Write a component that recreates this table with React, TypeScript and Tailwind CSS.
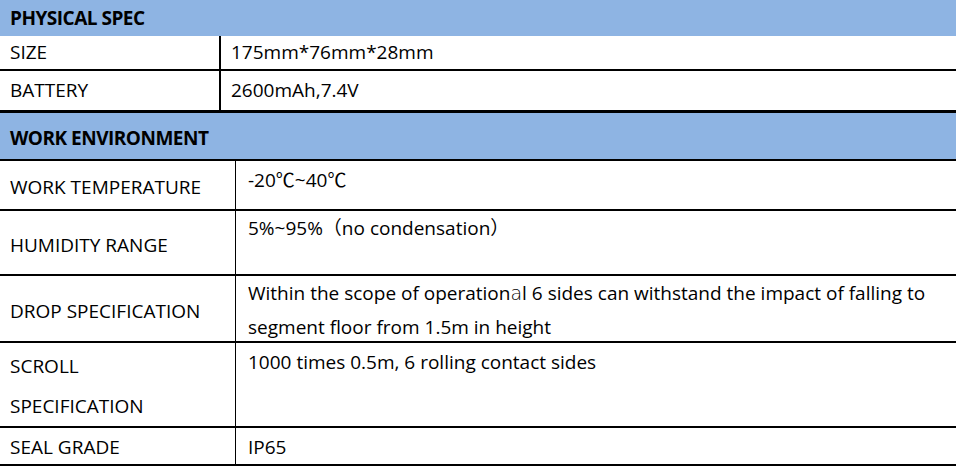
import React from 'react';

const font = { fontFamily: '"Open Sans", "Noto Sans CJK SC", sans-serif' };

export default function App() {
  return (
    <div className="w-[956px] bg-white text-black text-[19px]" style={font}>
      {/* PHYSICAL SPEC */}
      <div className="h-[36px] bg-[#8eb4e3] px-[10px] flex items-center font-bold tracking-[-0.5px]">PHYSICAL SPEC</div>
      <div className="flex h-[35px] border-b-2 border-black">
        <div className="w-[221px] border-r-2 border-black px-[10px] flex items-center">SIZE</div>
        <div className="flex-1 px-[10px] flex items-center">175mm*76mm*28mm</div>
      </div>
      <div className="flex h-[42px] border-b-[3px] border-black">
        <div className="w-[221px] border-r-2 border-black px-[10px] flex items-center">BATTERY</div>
        <div className="flex-1 px-[10px] flex items-center">2600mAh,7.4V</div>
      </div>

      {/* WORK ENVIRONMENT */}
      <div className="h-[48px] bg-[#8eb4e3] border-b-2 border-black px-[10px] pt-[5px] flex items-center font-bold tracking-[-0.5px]">
        WORK ENVIRONMENT
      </div>
      <div className="flex h-[50px] border-b-2 border-black">
        <div className="w-[236px] border-r border-black px-[10px] pt-[4px] flex items-center">WORK TEMPERATURE</div>
        <div className="flex-1 px-[12px] pt-[2px] leading-[34px]">-20℃~40℃</div>
      </div>
      <div className="flex h-[65px] border-b-2 border-black">
        <div className="w-[236px] border-r border-black px-[10px] pt-[5px] flex items-center">HUMIDITY RANGE</div>
        <div className="flex-1 px-[12px] leading-[34px]">5%~95%（no condensation）</div>
      </div>
      <div className="flex h-[67px] border-b-2 border-black">
        <div className="w-[236px] border-r border-black px-[10px] pt-[5px] flex items-center">DROP SPECIFICATION</div>
        <div className="flex-1 px-[12px] leading-[34px] whitespace-nowrap">
          Within the scope of operation<span className="font-light" style={{ fontFamily: '"DejaVu Sans", sans-serif' }}>a</span>l 6 sides can withstand the impact of falling to
          <br />
          segment floor from 1.5m in height
        </div>
      </div>
      <div className="flex h-[85px] border-b-2 border-black">
        <div className="w-[236px] border-r border-black px-[10px] pt-[3px] flex items-center leading-[40px]">
          SCROLL
          <br />
          SPECIFICATION
        </div>
        <div className="flex-1 px-[12px] pt-[2px] leading-[34px]">1000 times 0.5m, 6 rolling contact sides</div>
      </div>
      <div className="flex h-[38px] border-b-2 border-black">
        <div className="w-[236px] border-r border-black px-[10px] pt-[2px] flex items-center">SEAL GRADE</div>
        <div className="flex-1 px-[12px] pt-[2px] flex items-center">IP65</div>
      </div>
    </div>
  );
}
